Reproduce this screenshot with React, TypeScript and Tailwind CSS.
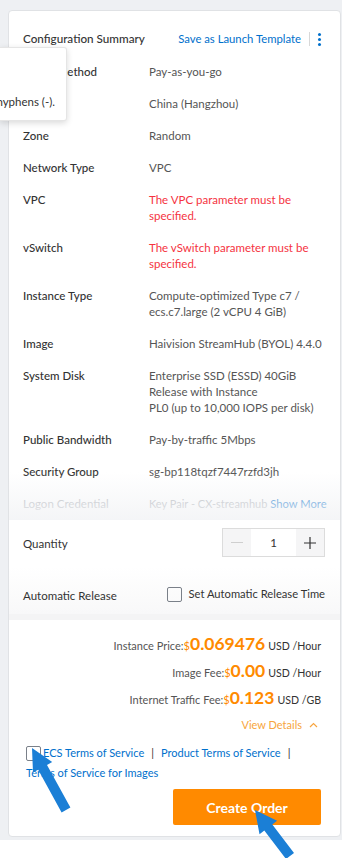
const rows: { label: string; lines: string[]; tone?: "error" | "muted" }[] = [
  { label: "Billing Method", lines: ["Pay-as-you-go"] },
  { label: "Region", lines: ["China (Hangzhou)"] },
  { label: "Zone", lines: ["Random"] },
  { label: "Network Type", lines: ["VPC"] },
  { label: "VPC", lines: ["The VPC parameter must be", "specified."], tone: "error" },
  { label: "vSwitch", lines: ["The vSwitch parameter must be", "specified."], tone: "error" },
  { label: "Instance Type", lines: ["Compute-optimized Type c7 /", "ecs.c7.large (2 vCPU 4 GiB)"] },
  { label: "Image", lines: ["Haivision StreamHub (BYOL) 4.4.0"] },
  {
    label: "System Disk",
    lines: ["Enterprise SSD (ESSD) 40GiB", "Release with Instance", "PL0 (up to 10,000 IOPS per disk)"],
  },
  { label: "Public Bandwidth", lines: ["Pay-by-traffic 5Mbps"] },
  { label: "Security Group", lines: ["sg-bp118tqzf7447rzfd3jh"] },
];

function PriceLine({ label, amount, unit }: { label: string; amount: string; unit: string }) {
  return (
    <div className="flex items-center justify-end h-[27px]">
      <span className="whitespace-nowrap">
        <span className="text-[11px] text-[#555]">{label}</span>
        <span className="text-[11px] text-[#ff8a00]">$</span>
        <span className="text-[17.5px] font-bold text-[#ff8a00]">{amount}</span>
        <span className="ml-[3px] text-[10.6px] text-[#333]">{unit}</span>
      </span>
    </div>
  );
}

export default function App() {
  return (
    <div className="relative w-[342px] min-h-[858px] bg-white font-['Lato',sans-serif] overflow-hidden">
      <div className="bg-[#eef0f3] pl-2 pr-[1px] pt-[10px] pb-[3px]">
        <div className="bg-white border border-[#e0e2e5] rounded-[4px] overflow-hidden">
          {/* summary */}
          <div className="relative px-[14px] pt-[18px] pb-[8px]">
            <div className="flex items-center h-[20px]">
              <span className="text-[11.7px] font-medium text-[#333]">Configuration Summary</span>
              <span className="ml-auto text-[11.3px] text-[#0070cc]">Save as Launch Template</span>
              <span className="mx-[8px] h-[14px] w-px bg-[#d8d8d8]" />
              <span className="flex flex-col gap-[2px] mr-[5px]">
                <span className="w-[3px] h-[3px] rounded-full bg-[#0070cc]" />
                <span className="w-[3px] h-[3px] rounded-full bg-[#0070cc]" />
                <span className="w-[3px] h-[3px] rounded-full bg-[#0070cc]" />
              </span>
            </div>
            <div className="mt-[15px] flex flex-col gap-[16px]">
              {rows.map((r) => (
                <div key={r.label} className="flex leading-[16px] text-[11.5px]">
                  <div className="w-[126px] shrink-0 font-medium text-[#333]">{r.label}</div>
                  <div className={r.tone === "error" ? "text-[#f5333f]" : "text-[#555]"}>
                    {r.lines.map((l) => (
                      <div key={l}>{l}</div>
                    ))}
                  </div>
                </div>
              ))}
              <div className="flex items-end leading-[16px] text-[11px] text-[#a9adb3]">
                <div className="w-[126px] shrink-0 text-[11.5px]">Logon Credential</div>
                <div className="whitespace-nowrap">Key Pair - CX-streamhub</div>
                <div className="ml-[3px] text-[11.2px] text-[#0070cc] whitespace-nowrap">Show More</div>
              </div>
            </div>
            <div className="pointer-events-none absolute left-0 right-0 bottom-0 h-[48px] bg-linear-to-b from-white/0 to-[#f3f4f6]/90" />
          </div>

          {/* quantity & release */}
          <div className="px-[14px] pt-[8px] pb-[10px] bg-linear-to-b from-white via-white to-[#f8f8f9]">
            <div className="flex items-center">
              <span className="mt-[3px] text-[11.5px] text-[#333]">Quantity</span>
              <div className="ml-auto mr-[1px] flex h-[29px] w-[103px] border border-[#dcdcdc]">
                <div className="w-[28px] bg-[#f5f5f6] flex items-center justify-center">
                  <span className="w-[12px] h-px bg-[#cfcfcf]" />
                </div>
                <div className="flex-1 flex items-center justify-center text-[11.5px] text-[#333]">1</div>
                <div className="w-[28px] bg-[#f5f5f6] flex items-center justify-center">
                  <svg width="14" height="14" viewBox="0 0 14 14">
                    <path d="M7 1v12M1 7h12" stroke="#333" strokeWidth="1.2" />
                  </svg>
                </div>
              </div>
            </div>
            <div className="mt-[28px] flex items-center">
              <span className="mt-[2px] text-[11.5px] text-[#333]">Automatic Release</span>
              <span className="ml-auto w-[15px] h-[15px] border border-[#7a8089] rounded-[2px]" />
              <span className="ml-[7px] mr-[1px] text-[11.2px] text-[#333]">Set Automatic Release Time</span>
            </div>
          </div>
          <div className="h-[6px] bg-[#f4f4f5]" />

          {/* price */}
          <div className="px-[19px] pt-[10px]">
            <PriceLine label="Instance Price:" amount="0.069476" unit="USD /Hour" />
            <PriceLine label="Image Fee:" amount="0.00" unit="USD /Hour" />
            <PriceLine label="Internet Traffic Fee:" amount="0.123" unit="USD /GB" />
            <div className="flex items-center justify-end h-[27px] pr-[3px] text-[11px] text-[#f7a540]">
              View Details
              <svg className="ml-[7px]" width="9" height="6" viewBox="0 0 9 6">
                <path d="M1 5l3.5-3.5L8 5" stroke="#f7a540" strokeWidth="1.2" fill="none" />
              </svg>
            </div>
          </div>

          {/* terms */}
          <div className="px-[17px] pt-[5px] text-[11px] leading-[20px] text-[#0070cc]">
            <div className="flex items-center">
              <span className="w-[15px] h-[15px] border border-[#7a8089] rounded-[2px] bg-white" />
              <span className="ml-[2px]">ECS Terms of Service</span>
              <span className="mx-[7px] text-[#333]">|</span>
              <span>Product Terms of Service</span>
              <span className="ml-[7px] text-[#333]">|</span>
            </div>
            <div>Terms of Service for Images</div>
          </div>
          <div className="flex justify-end px-[19px] pt-[6px] pb-[11px]">
            <button className="w-[148px] h-[36px] bg-[#ff8a00] rounded-[2px] text-white text-[14px] font-bold">
              Create Order
            </button>
          </div>
        </div>
      </div>

      {/* tooltip popup */}
      <div className="absolute left-0 top-[47px] w-[67px] h-[74px] bg-white rounded-r-[3px] border border-l-0 border-[#e5e5e5] shadow-[0_2px_6px_rgba(0,0,0,0.15)] overflow-hidden">
        <div className="absolute right-[11px] top-[45px] whitespace-nowrap text-[11.5px] text-[#333]">
          The name can contain letters, digits, and hyphens (-).
        </div>
      </div>

      {/* annotation arrows */}
      <svg className="pointer-events-none absolute left-0 top-0" width="342" height="858" viewBox="0 0 342 858">
        <polygon
          points="32,748 52.2,762 47,764.9 70.4,807.6 61.6,812.4 38.2,769.7 33,772.6"
          fill="#1b7fd6"
        />
        <polygon
          points="255,810 277.1,820.8 272.3,824.5 294,853 286,859 264.3,830.5 259.5,834.2"
          fill="#1b7fd6"
        />
      </svg>
    </div>
  );
}
